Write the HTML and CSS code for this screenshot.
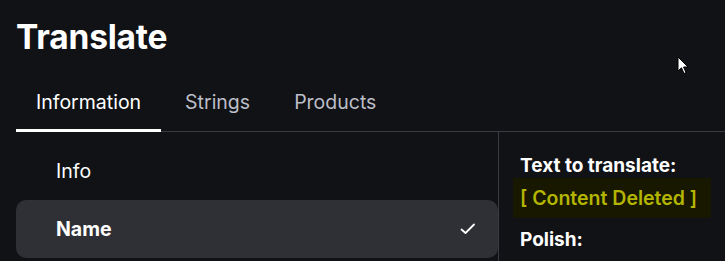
FILE: index.html
```html
<!DOCTYPE html>
<html>
<head>
<meta charset="utf-8">
<link rel="stylesheet" href="styles.css">
</head>
<body>
<div class="page">
  <h1 class="title">Translate</h1>
  <nav class="tabs">
    <div class="tab active">Information</div>
    <div class="tab">Strings</div>
    <div class="tab">Products</div>
  </nav>
  <div class="content">
    <div class="list">
      <div class="row">Info</div>
      <div class="row selected">Name
        <svg class="check" width="16" height="12" viewBox="0 0 16 12"><path d="M1.5 6.5 L5.5 10 L14 1.5" fill="none" stroke="#fff" stroke-width="1.8" stroke-linecap="round" stroke-linejoin="round"/></svg>
      </div>
    </div>
    <div class="detail">
      <div class="label">Text to translate:</div>
      <div class="source">[ Content Deleted ]</div>
      <div class="label">Polish:</div>
    </div>
  </div>
  <svg class="cursor" width="14" height="20" viewBox="0 0 14 20"><path d="M1 1 L1 15 L4.5 11.8 L7 17.5 L9 16.6 L6.6 11 L11 11 Z" fill="#fff" stroke="#000" stroke-width="1"/></svg>
</div>
</body>
</html>
```
FILE: styles.css
```css
html, body {
  margin: 0;
  padding: 0;
  background: #111216;
  height: 100%;
  overflow: hidden;
}
.page {
  position: relative;
  font-family: Inter, "Noto Sans", sans-serif;
  color: #fff;
  padding: 0 0 0 16px;
}
.title {
  margin: 0;
  padding-top: 16px;
  font-size: 33.5px;
  font-weight: 700;
  line-height: 42px;
  letter-spacing: -0.2px;
}
.tabs {
  display: flex;
  gap: 4px;
  margin-top: 22px;
  border-bottom: 1px solid #3a3b40;
}
.tab {
  padding: 0 20px;
  height: 52px;
  line-height: 44px;
  font-size: 19.5px;
  color: #bcbec8;
  box-sizing: border-box;
  border-bottom: 3px solid transparent;
  margin-bottom: -1px;
}
.tab.active {
  color: #fff;
  border-bottom-color: #fff;
}
.content {
  display: flex;
  margin-left: -16px;
}
.list {
  width: 482px;
  padding: 10px 0 0 16px;
  border-right: 1px solid #3a3b40;
  height: 130px;
  flex: none;
}
.row {
  display: flex;
  align-items: center;
  justify-content: space-between;
  height: 58px;
  padding: 0 22px 0 40px;
  font-size: 19.5px;
  border-radius: 10px;
}
.row.selected {
  background: #2f3035;
  font-weight: 700;
}
.detail {
  padding: 23px 0 0 21px;
}
.label {
  font-size: 19px;
  font-weight: 700;
  line-height: 22px;
}
.source {
  display: inline-block;
  margin: 1px 0 11px -7px;
  padding: 8px 14px 8px 7px;
  background: #181800;
  color: #b3b500;
  font-size: 19.5px;
  font-weight: 600;
  line-height: 24px;
}
.cursor {
  position: absolute;
  left: 677px;
  top: 56px;
}
```
